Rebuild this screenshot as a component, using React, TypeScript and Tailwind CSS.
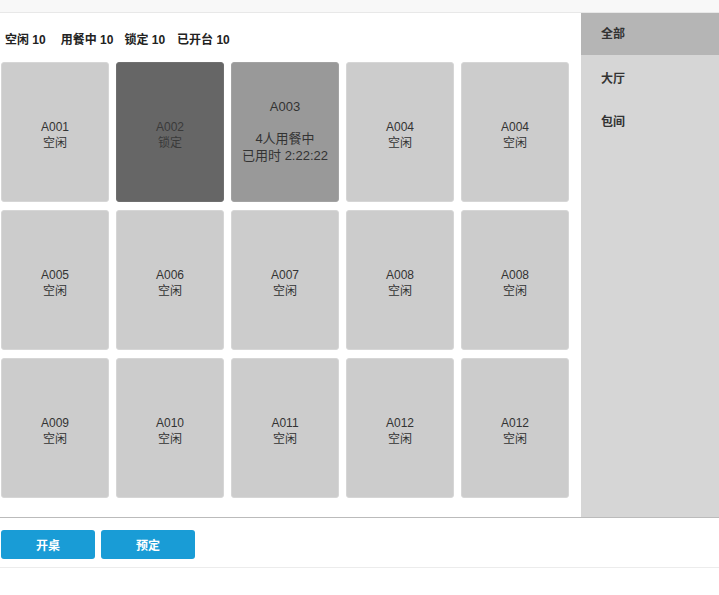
const font = { fontFamily: '"Liberation Sans", "Noto Sans CJK SC", Arial, sans-serif' };

type Table = { code: string; status: "idle" | "locked" | "dining"; guests?: number; used?: string };

const tables: Table[] = [
  { code: "A001", status: "idle" },
  { code: "A002", status: "locked" },
  { code: "A003", status: "dining", guests: 4, used: "2:22:22" },
  { code: "A004", status: "idle" },
  { code: "A004", status: "idle" },
  { code: "A005", status: "idle" },
  { code: "A006", status: "idle" },
  { code: "A007", status: "idle" },
  { code: "A008", status: "idle" },
  { code: "A008", status: "idle" },
  { code: "A009", status: "idle" },
  { code: "A010", status: "idle" },
  { code: "A011", status: "idle" },
  { code: "A012", status: "idle" },
  { code: "A012", status: "idle" },
];

function TableCard({ t }: { t: Table }) {
  if (t.status === "dining") {
    return (
      <div className="h-[140px] rounded-[3px] bg-[#999999] border border-[#a3a3a3] flex flex-col items-center justify-center text-[13px] leading-[17px] text-[#333]">
        <div className="-mt-[2px]">{t.code}</div>
        <div className="mt-[15px]">{t.guests}人用餐中</div>
        <div>已用时 {t.used}</div>
      </div>
    );
  }
  const locked = t.status === "locked";
  return (
    <div
      className={
        locked
          ? "h-[140px] pt-[6px] rounded-[3px] bg-[#666666] border border-[#707070] flex flex-col items-center justify-center text-[12px] leading-[16px] text-[#3a3a3a]"
          : "h-[140px] pt-[6px] rounded-[3px] bg-[#cccccc] border border-[#d6d6d6] flex flex-col items-center justify-center text-[12px] leading-[16px] text-[#333]"
      }
    >
      <div>{t.code}</div>
      <div>{locked ? "锁定" : "空闲"}</div>
    </div>
  );
}

export default function App() {
  return (
    <div className="w-[719px] h-[595px] bg-white text-[#333]" style={font}>
      <div className="h-[13px] bg-[#f8f8f8] border-b border-[#e8e8e8]" />
      <div className="flex h-[505px] border-b border-[#bbbbbb]">
        <div className="w-[581px]">
          <div className="h-[49px] flex items-center pt-[5px] pl-[5px] text-[12px] font-bold text-[#222]">
            <span className="mr-[15px]">空闲 10</span>
            <span className="mr-[11px]">用餐中 10</span>
            <span className="mr-[12px]">锁定 10</span>
            <span>已开台 10</span>
          </div>
          <div className="pl-px grid grid-cols-[108px_108px_108px_108px_108px] gap-x-[7px] gap-y-2">
            {tables.map((t, i) => (
              <TableCard key={i} t={t} />
            ))}
          </div>
        </div>
        <div className="flex-1 bg-[#d6d6d6] text-[12px] font-bold text-[#333]">
          <div className="h-[42px] bg-[#b5b5b5] flex items-center pl-5">全部</div>
          <div className="h-[47px] flex items-center pl-5">大厅</div>
          <div className="h-[40px] flex items-center pl-5">包间</div>
        </div>
      </div>
      <div className="h-[50px] border-b border-[#ececec] flex items-start pt-[12px] pl-px gap-[6px]">
        <button className="w-[94px] h-[29px] pt-[3px] rounded-[3px] bg-[#199cd6] text-white text-[12px] font-bold">开桌</button>
        <button className="w-[94px] h-[29px] pt-[3px] rounded-[3px] bg-[#199cd6] text-white text-[12px] font-bold">预定</button>
      </div>
    </div>
  );
}
